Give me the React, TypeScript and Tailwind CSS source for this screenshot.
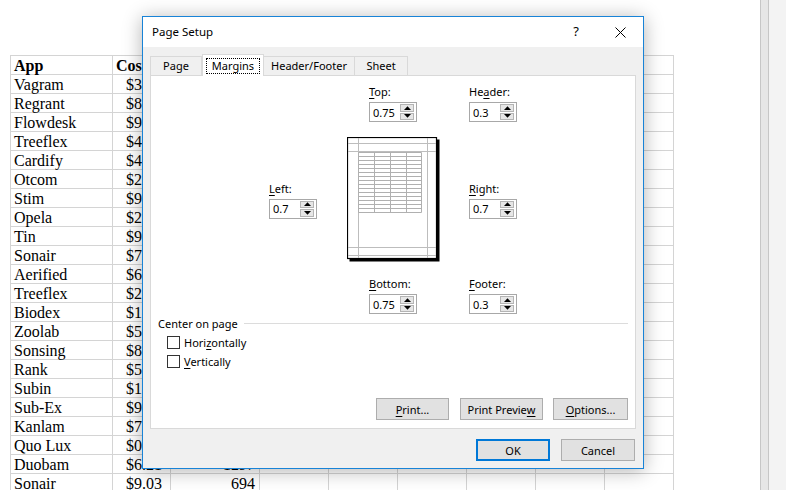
import React from "react";

const data: [string, string, string][] = [
  ["Vagram", "$3.42", "1520"],
  ["Regrant", "$8.15", "318"],
  ["Flowdesk", "$9.67", "2044"],
  ["Treeflex", "$4.21", "871"],
  ["Cardify", "$4.88", "1432"],
  ["Otcom", "$2.36", "562"],
  ["Stim", "$9.54", "1109"],
  ["Opela", "$2.73", "745"],
  ["Tin", "$9.12", "1986"],
  ["Sonair", "$7.45", "433"],
  ["Aerified", "$6.09", "1276"],
  ["Treeflex", "$2.94", "905"],
  ["Biodex", "$1.58", "1641"],
  ["Zoolab", "$5.61", "287"],
  ["Sonsing", "$8.27", "1358"],
  ["Rank", "$5.33", "612"],
  ["Subin", "$1.76", "1824"],
  ["Sub-Ex", "$9.40", "497"],
  ["Kanlam", "$7.18", "1163"],
  ["Quo Lux", "$0.95", "788"],
  ["Duobam", "$6.21", "1297"],
  ["Sonair", "$9.03", "694"],
];

const extraCols = [0, 1, 2, 3, 4, 5];

function U({ children }: { children: React.ReactNode }) {
  return <span className="underline underline-offset-[2px]">{children}</span>;
}

function Spin({ value }: { value: string }) {
  return (
    <div className="flex h-[20px] w-[48px] items-center border border-[#a8a8a8] bg-white pl-[3px] pr-[2px]">
      <span className="flex-1 leading-none">{value}</span>
      <div className="flex h-[16px] w-[14px] flex-col gap-px">
        <div className="flex flex-1 items-center justify-center border border-[#b4b4b4] bg-[#e6e6e6]">
          <svg width="7" height="4" viewBox="0 0 7 4">
            <path d="M0 4L3.5 0.2L7 4Z" fill="#000" />
          </svg>
        </div>
        <div className="flex flex-1 items-center justify-center border border-[#b4b4b4] bg-[#e6e6e6]">
          <svg width="7" height="4" viewBox="0 0 7 4">
            <path d="M0 0L3.5 3.8L7 0Z" fill="#000" />
          </svg>
        </div>
      </div>
    </div>
  );
}

function Field({ label, value }: { label: React.ReactNode; value: string }) {
  return (
    <div className="flex w-[48px] flex-col">
      <div className="h-[16px] whitespace-nowrap leading-[16px]">{label}</div>
      <div className="mt-[2px]">
        <Spin value={value} />
      </div>
    </div>
  );
}

function Btn({ children, w, primary }: { children: React.ReactNode; w: string; primary?: boolean }) {
  return (
    <div
      className={
        "flex h-[22px] items-center justify-center bg-[#e1e1e1] leading-none " +
        w +
        (primary ? " border-2 border-[#0078d7]" : " border border-[#adadad]")
      }
    >
      {children}
    </div>
  );
}

function Preview() {
  const rowsY: number[] = [];
  for (let y = 15.5; y <= 75.5; y += 4) rowsY.push(y);
  return (
    <svg width="93" height="125" viewBox="0 0 93 125">
      <rect x="2.5" y="2.5" width="90" height="122" fill="#000" />
      <rect x="0.5" y="0.5" width="89" height="121" fill="#fff" stroke="#000" strokeWidth="1.2" />
      <g stroke="#bdbdbd" strokeWidth="1">
        <line x1="11.5" y1="1" x2="11.5" y2="121" />
        <line x1="80.5" y1="1" x2="80.5" y2="121" />
        <line x1="1" y1="6.5" x2="89" y2="6.5" />
        <line x1="1" y1="14.5" x2="89" y2="14.5" />
        <line x1="1" y1="110.5" x2="89" y2="110.5" />
        <line x1="1" y1="118.5" x2="89" y2="118.5" />
      </g>
      <g stroke="#b0b0b0" strokeWidth="1">
        {rowsY.map((y) => (
          <line key={y} x1="11.5" y1={y} x2="74.5" y2={y} />
        ))}
        {[11.5, 27.5, 43.5, 59.5, 74.5].map((x) => (
          <line key={x} x1={x} y1="15.5" x2={x} y2="75.5" />
        ))}
      </g>
    </svg>
  );
}

function Checkbox({ label }: { label: React.ReactNode }) {
  return (
    <div className="flex h-[19px] items-center pl-[16px]">
      <div className="h-[13px] w-[13px] border border-[#333] bg-white" />
      <span className="ml-[4px] leading-none">{label}</span>
    </div>
  );
}

export default function App() {
  return (
    <div className="relative flex h-[490px] w-[786px] overflow-hidden bg-white">
      {/* sheet */}
      <div className="flex-1 pl-[10px] pt-[55px] font-['Liberation_Serif',serif] text-[16px] text-black">
        <div className="w-[664px] border-l border-t border-[#d4d4d4]">
          <div className="flex h-[19px] border-b border-[#d4d4d4] font-bold leading-[20px]">
            <div className="w-[102px] border-r border-[#d4d4d4] pl-[3px]">App</div>
            <div className="w-[58px] border-r border-[#d4d4d4] pl-[3px]">Cost</div>
            <div className="w-[89px] border-r border-[#d4d4d4] pl-[3px]">Installs</div>
            {extraCols.map((c) => (
              <div key={c} className="w-[69px] border-r border-[#d4d4d4]" />
            ))}
          </div>
          {data.map((r, i) => (
            <div key={i} className="flex h-[19px] border-b border-[#d4d4d4] leading-[20px]">
              <div className="w-[102px] border-r border-[#d4d4d4] pl-[3px]">{r[0]}</div>
              <div className="w-[58px] border-r border-[#d4d4d4] pr-[8px] text-right">{r[1]}</div>
              <div className="w-[89px] border-r border-[#d4d4d4] pr-[4px] text-right">{r[2]}</div>
              {extraCols.map((c) => (
                <div key={c} className="w-[69px] border-r border-[#d4d4d4]" />
              ))}
            </div>
          ))}
        </div>
      </div>
      {/* scrollbar strip */}
      <div className="flex w-[26px]">
        <div className="w-[9px] border-x border-[#c6c6c6] bg-[#e6e6e6]" />
        <div className="flex-1 bg-[#f3f3f3]" />
      </div>

      {/* dialog */}
      <div className="absolute left-[142px] top-[16px] flex h-[453px] w-[502px] flex-col border border-[#1883d7] bg-[#f0f0f0] font-['Noto_Sans',sans-serif] text-[11px] text-black shadow-[0_2px_18px_rgba(0,0,0,0.3)]">
        <div className="flex h-[30px] items-center bg-white pl-[9px]">
          <span className="flex-1 text-[11.5px]">Page Setup</span>
          <span className="mr-[36px] text-[13px]">?</span>
          <svg width="11" height="11" viewBox="0 0 11 11" className="mr-[17px]">
            <path d="M0.5 0.5L10.5 10.5M10.5 0.5L0.5 10.5" stroke="#000" strokeWidth="1" />
          </svg>
        </div>
        <div className="flex flex-1 flex-col pl-[7px] pr-[7px] pt-[7px]">
          {/* tabs */}
          <div className="flex h-[21px] items-end">
            <div className="flex h-[19px] w-[52px] items-center justify-center border-x border-t border-[#d9d9d9] bg-[#f0f0f0]">
              Page
            </div>
            <div className="relative z-10 -mb-px flex h-[22px] w-[62px] items-center justify-center border-x border-t border-[#d9d9d9] bg-white">
              <span className="border border-dotted border-black px-[5px] leading-[14px]">Margins</span>
            </div>
            <div className="flex h-[19px] w-[91px] items-center justify-center border-r border-t border-[#d9d9d9] bg-[#f0f0f0]">
              Header/Footer
            </div>
            <div className="flex h-[19px] w-[53px] items-center justify-center border-r border-t border-[#d9d9d9] bg-[#f0f0f0]">
              Sheet
            </div>
          </div>
          {/* panel */}
          <div className="flex h-[354px] flex-col border border-[#d9d9d9] bg-white pb-[8px] pt-[8px]">
            <div className="flex pl-[218px]">
              <Field label={<><U>T</U>op:</>} value="0.75" />
              <div className="ml-[52px]">
                <Field label={<>He<U>a</U>der:</>} value="0.3" />
              </div>
            </div>
            <div className="mt-[15px] flex h-[125px] items-center pl-[118px]">
              <Field label={<><U>L</U>eft:</>} value="0.7" />
              <div className="ml-[30px]">
                <Preview />
              </div>
              <div className="ml-[29px]">
                <Field label={<><U>R</U>ight:</>} value="0.7" />
              </div>
            </div>
            <div className="mt-[14px] flex pl-[218px]">
              <Field label={<><U>B</U>ottom:</>} value="0.75" />
              <div className="ml-[52px]">
                <Field label={<><U>F</U>ooter:</>} value="0.3" />
              </div>
            </div>
            <div className="mt-px flex h-[16px] items-center pl-[7px] pr-[7px]">
              <span className="leading-none">Center on page</span>
              <div className="ml-[6px] h-px flex-1 bg-[#dcdcdc]" />
            </div>
            <div className="mt-[2px]">
              <Checkbox label={<>Hori<U>z</U>ontally</>} />
              <Checkbox label={<><U>V</U>ertically</>} />
            </div>
            <div className="mt-auto flex justify-end gap-[11px] pr-[7px]">
              <Btn w="w-[73px]">
                <U>P</U>rint...
              </Btn>
              <Btn w="w-[83px]">
                Print Previe<U>w</U>
              </Btn>
              <div className="-ml-px">
                <Btn w="w-[75px]">
                  <U>O</U>ptions...
                </Btn>
              </div>
            </div>
          </div>
          <div className="mt-[10px] flex justify-end gap-[11px] pr-px">
            <Btn w="w-[74px]" primary>
              OK
            </Btn>
            <Btn w="w-[74px]">Cancel</Btn>
          </div>
        </div>
      </div>
    </div>
  );
}
